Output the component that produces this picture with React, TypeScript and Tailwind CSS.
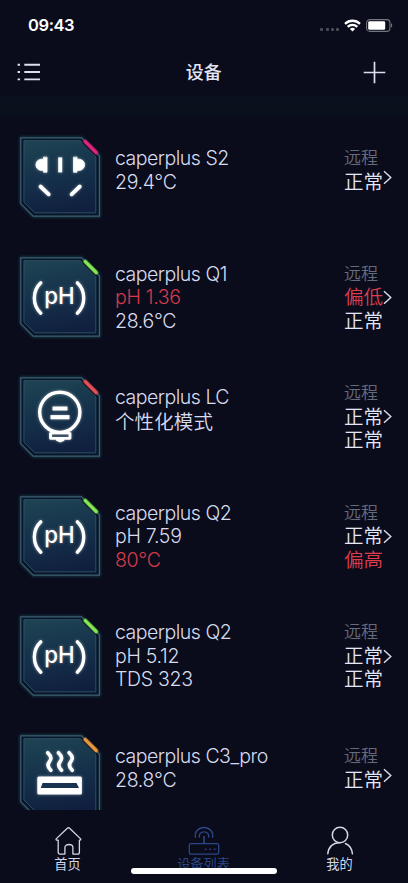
import type { ReactNode } from "react";
import { clsx } from "clsx";

type Line = { text: string; alert?: boolean };

type Device = {
  name: string;
  icon: ReactNode;
  accent: string;
  values: Line[];
  states: Line[];
};

const SocketGlyph = () => (
  <g fill="#fff" stroke="#fff" strokeLinecap="round">
    <path d="M27 20.5V35.2H23.5V33.4H21.5A5.6 5.6 0 0 1 21.5 22.2H23.5V20.5Z" strokeWidth="0.8" />
    <path d="M53.5 20.5V35.2H57V33.4H59A5.6 5.6 0 0 0 59 22.2H57V20.5Z" strokeWidth="0.8" />
    <path d="M40.2 20.4V35.4" strokeWidth="4" strokeLinecap="butt" />
    <path d="M20.5 49.5L28.7 57.3M59.8 49.5L51.6 57.3" strokeWidth="3.9" />
  </g>
);

const PhGlyph = () => (
  <g>
    <path d="M20.8 25.8C12.2 34 12.2 48 20.8 56.2M57.3 25.8C65.9 34 65.9 48 57.3 56.2" fill="none" stroke="#fff" strokeWidth="3.4" strokeLinecap="round" />
    <text x="24.2" y="46.5" textLength="30.4" lengthAdjust="spacingAndGlyphs" fontFamily="Inter, sans-serif" fontSize="22.4" fontWeight="500" fill="#fff">
      pH
    </text>
  </g>
);

const BulbGlyph = () => (
  <g fill="none" stroke="#fff">
    <circle cx="39.8" cy="35.3" r="20.1" strokeWidth="3.4" />
    <path d="M32.5 31.5H47.5" strokeWidth="4" />
    <path d="M30.5 40.2H49.5" strokeWidth="4.2" />
    <path d="M30.5 55.5V61.3H50V55.5" strokeWidth="2.8" strokeLinejoin="round" />
    <path d="M30.5 56.2H50" strokeWidth="2.4" />
    <path d="M37 63H43.5L40.2 64.4Z" strokeWidth="2" fill="#fff" strokeLinejoin="round" />
  </g>
);

const HeaterGlyph = () => (
  <g>
    <path
      d="M27.8 17.8C32.3 21.8 31.3 24.3 29.3 26.8C27.3 29.3 27.3 31.8 30.8 35.3M38.5 17.8C43 21.8 42 24.3 40 26.8C38 29.3 38 31.8 41.5 35.3M49.2 17.8C53.7 21.8 52.7 24.3 50.7 26.8C48.7 29.3 48.7 31.8 52.2 35.3"
      fill="none"
      stroke="#fff"
      strokeWidth="3.7"
      strokeLinecap="round"
    />
    <rect x="17.3" y="41.6" width="44.6" height="18" rx="1.5" fill="#fff" />
    <path d="M22.5 48H56.5L59 53H20.8Z" fill="#173350" />
  </g>
);

const devices: Device[] = [
  {
    name: "caperplus S2",
    icon: <SocketGlyph />,
    accent: "#e0247e",
    values: [{ text: "29.4°C" }],
    states: [{ text: "正常" }],
  },
  {
    name: "caperplus Q1",
    icon: <PhGlyph />,
    accent: "#83e653",
    values: [{ text: "pH 1.36", alert: true }, { text: "28.6°C" }],
    states: [{ text: "偏低", alert: true }, { text: "正常" }],
  },
  {
    name: "caperplus LC",
    icon: <BulbGlyph />,
    accent: "#e64d57",
    values: [{ text: "个性化模式" }],
    states: [{ text: "正常" }, { text: "正常" }],
  },
  {
    name: "caperplus Q2",
    icon: <PhGlyph />,
    accent: "#83e653",
    values: [{ text: "pH 7.59" }, { text: "80°C", alert: true }],
    states: [{ text: "正常" }, { text: "偏高", alert: true }],
  },
  {
    name: "caperplus Q2",
    icon: <PhGlyph />,
    accent: "#83e653",
    values: [{ text: "pH 5.12" }, { text: "TDS 323" }],
    states: [{ text: "正常" }, { text: "正常" }],
  },
  {
    name: "caperplus C3_pro",
    icon: <HeaterGlyph />,
    accent: "#e8953c",
    values: [{ text: "28.8°C" }],
    states: [{ text: "正常" }],
  },
];

const hasHan = (text: string) => /[\u4e00-\u9fff]/.test(text);

function Gradients() {
  return (
    <svg width="0" height="0" className="absolute">
      <defs>
        <linearGradient id="tile" x1="0.4" y1="0" x2="0.6" y2="1">
          <stop offset="0" stopColor="#1d4252" />
          <stop offset="0.5" stopColor="#15304a" />
          <stop offset="1" stopColor="#101f3f" />
        </linearGradient>
        <filter id="glow" x="-20%" y="-20%" width="140%" height="140%">
          <feGaussianBlur stdDeviation="1.5" />
        </filter>
      </defs>
    </svg>
  );
}

function DeviceTile({ accent, children }: { accent: string; children: ReactNode }) {
  const outer = "M0.8 0.8H61.5L79.4 19V79.2H13.2L0.8 66.6Z";
  return (
    <svg width="80" height="80" viewBox="0 0 80 80" className="mb-[0.8px] shrink-0 overflow-visible">
      <path d={outer} fill="#081427" stroke="#1d5468" strokeWidth="2.2" filter="url(#glow)" opacity="0.75" />
      <path d={outer} fill="#091629" stroke="#3b6070" strokeWidth="1.2" />
      <path d="M3.9 3.7H60.5L75.8 19.8V75.8H14.8L3.9 65Z" fill="url(#tile)" stroke="#2f566a" strokeWidth="0.9" />
      <path d="M64.3 3.6L77 16.3" stroke="#07101c" strokeWidth="6.4" />
      <path d="M65.3 4.6L76.2 15.5" stroke={accent} strokeWidth="5" strokeLinecap="round" opacity="0.3" />
      <path d="M65.3 4.6L76.2 15.5" stroke={accent} strokeWidth="3.3" strokeLinecap="round" />
      <g filter="url(#glow)" opacity="0.45">
        {children}
      </g>
      {children}
    </svg>
  );
}

function DeviceRow({ device }: { device: Device }) {
  return (
    <li className="flex h-[119.6px] shrink-0 items-center pl-5">
      <DeviceTile accent={device.accent}>{device.icon}</DeviceTile>
      <div
        className={clsx(
          "ml-[15px] flex-1 text-[19.5px] leading-[23.6px] font-[350] text-[#d8dbef]",
          device.values.length === 1 ? "pb-[14px]" : "pt-px",
        )}
      >
        <p className="h-[23.6px] tracking-[-0.5px] whitespace-nowrap">{device.name}</p>
        {device.values.map((line) => (
          <p
            key={line.text}
            className={clsx(
              "h-[23.6px] whitespace-nowrap",
              line.alert && "text-[#d63a4c]",
              hasHan(line.text) ? "pt-px tracking-[0.1px]" : "tracking-[-0.3px]",
            )}
          >
            {line.text}
          </p>
        ))}
      </div>
      <div
        className={clsx(
          "w-[39px] text-[19.5px] leading-[23.6px] font-[350] text-[#e4e7f8]",
          device.states.length === 1 ? "pb-[14px]" : "pt-px",
        )}
      >
        <p className="h-[23.6px] text-[17px] text-[#666a7d]">远程</p>
        {device.states.map((line, i) => (
          <p key={i} className={clsx("h-[23.6px] whitespace-nowrap", line.alert && "text-[#de3c4e]")}>
            {line.text}
          </p>
        ))}
      </div>
      <svg width="9" height="15" viewBox="0 0 9 15" className="mr-4 shrink-0" fill="none" stroke="#dcdff2" strokeWidth="1.4">
        <path d="M1 1.2L7.8 7.5L1 13.8" />
      </svg>
    </li>
  );
}

function StatusBar() {
  return (
    <div className="flex h-[50px] shrink-0 items-center justify-between pr-[15px] pl-7">
      <span className="text-[16.5px] font-semibold tracking-[-0.4px] text-white">09:43</span>
      <div className="flex items-center">
        <div className="mt-[9px] mr-[5px] flex gap-[2.2px]">
          {[0, 1, 2, 3].map((i) => (
            <span key={i} className="h-[3px] w-[3px] rounded-[1px] bg-[#4a4c58]" />
          ))}
        </div>
        <svg width="17" height="13" viewBox="0 0 17 13" fill="none" stroke="#fff" strokeWidth="2.3">
          <path d="M1 4.8A10.8 10.8 0 0 1 16 4.8" />
          <path d="M3.7 7.8A7 7 0 0 1 13.3 7.8" />
          <path d="M8.5 12.5L5.9 9.9A3.8 3.8 0 0 1 11.1 9.9Z" fill="#fff" stroke="none" />
        </svg>
        <svg width="27" height="13" viewBox="0 0 27 13" className="ml-[5px]">
          <rect x="0.6" y="0.6" width="23.3" height="11.8" rx="3.2" fill="none" stroke="#73757f" strokeWidth="1.1" />
          <rect x="2.2" y="2.2" width="17" height="8.6" rx="1.4" fill="#fff" />
          <path d="M25 4.3C26.6 4.8 26.6 8.2 25 8.7Z" fill="#73757f" />
        </svg>
      </div>
    </div>
  );
}

function NavBar() {
  return (
    <header className="flex h-[46px] shrink-0 items-center justify-between pr-[22.5px] pl-[17px]">
      <svg width="24" height="18" viewBox="0 0 24 18" stroke="#dcdff2" strokeWidth="1.9" className="-mt-[2px]">
        <path d="M0.6 1.8H3M7.3 1.8H23M0.6 9H3M7.3 9H23M0.6 16.4H3M7.3 16.4H23" />
      </svg>
      <h1 className="-mt-[2px] ml-[4px] text-[18px] font-medium text-[#e3e5f6]">设备</h1>
      <svg width="23" height="23" viewBox="0 0 23 23" stroke="#dcdff2" strokeWidth="1.7" className="-mt-[2px]">
        <path d="M0.7 11.5H22.3M11.5 0.7V22.3" />
      </svg>
    </header>
  );
}

function Tab({ label, active, children }: { label: string; active?: boolean; children: ReactNode }) {
  return (
    <div className={clsx("flex flex-1 flex-col items-center", active ? "text-[#2b4684]" : "text-[#d3d6e8]")}>
      <svg width="32" height="30" viewBox="0 0 32 30" fill="none" stroke="currentColor" strokeWidth="1.3" strokeLinecap="round" strokeLinejoin="round">
        {children}
      </svg>
      <span className="mt-px mr-px text-[13.2px] leading-[16px]">{label}</span>
    </div>
  );
}

function TabBar() {
  return (
    <nav className="relative flex h-[73px] shrink-0 pt-[14.5px]">
      <Tab label="首页">
        <path d="M6.2 15.2H4.8C3.9 15.2 3.8 14.3 4.4 13.6L15.3 3.3C16 2.6 16.9 2.6 17.6 3.3L28.4 13.6C29 14.3 28.9 15.2 28 15.2H27.4V27.2Q27.4 29.1 25.5 29.1H20.9V22.4C20.9 18.5 12.9 18.5 12.9 22.4V29.1H8.1Q6.2 29.1 6.2 27.2Z" />
      </Tab>
      <Tab label="设备列表" active>
        <rect x="1.3" y="18.6" width="29.4" height="10.6" rx="1.8" />
        <path d="M16 18V11.5" strokeWidth="1.6" />
        <path d="M7.4 12.3C6.4 6.5 10.5 2.5 16 2.5C21.5 2.5 25.6 6.5 24.6 12.3" />
        <path d="M11.4 12.2C10.8 9 12.9 6.8 16 6.8C19.1 6.8 21.2 9 20.6 12.2" />
        <path d="M17.5 24.2H18M22 24.2H22.5M26.5 24.2H27" strokeWidth="1.5" />
      </Tab>
      <Tab label="我的">
        <circle cx="16" cy="10" r="7.7" strokeWidth="1.5" />
        <path d="M3.8 28.8C4.3 22.5 8.5 17.7 15.5 17.7M21.5 18.5C25.5 20.3 28 24 28.4 28.8" strokeWidth="1.5" />
      </Tab>
      {/* home indicator */}
      <div className="absolute top-[58px] left-[131px] h-[6px] w-[146px] rounded-full bg-white" />
    </nav>
  );
}

export default function App() {
  return (
    <div className="flex h-[883px] w-[408px] flex-col overflow-hidden bg-[#0a0c1b] font-[Inter,'Noto_Sans_CJK_SC',sans-serif]">
      <Gradients />
      <StatusBar />
      <NavBar />
      <div className="h-[22px] shrink-0 bg-linear-to-b from-[#0a101d] via-[#0a111d] to-[#0a0d1b]" />
      <ul className="flex min-h-0 flex-1 flex-col overflow-hidden">
        {devices.map((device, i) => (
          <DeviceRow key={i} device={device} />
        ))}
      </ul>
      <TabBar />
    </div>
  );
}
